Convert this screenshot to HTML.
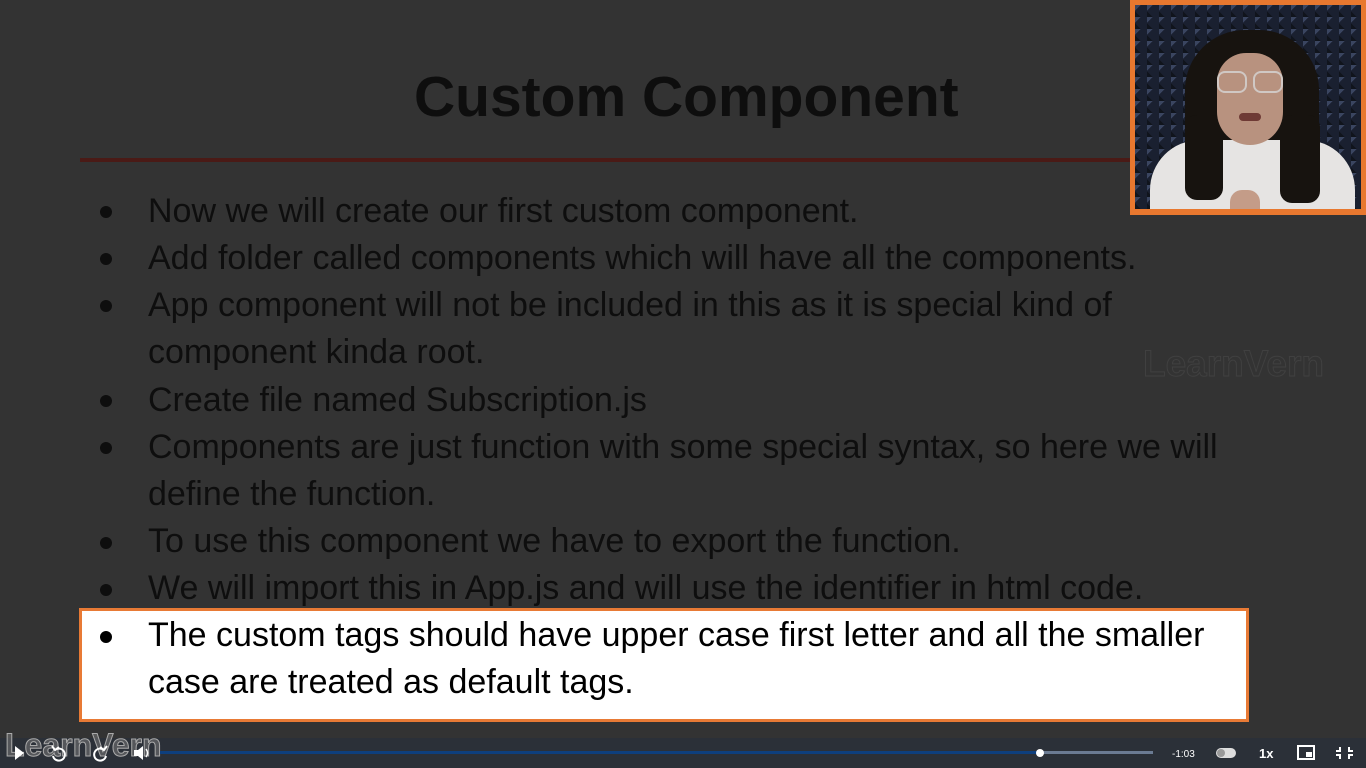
<!DOCTYPE html>
<html><head><meta charset="utf-8"><style>
*{margin:0;padding:0;box-sizing:border-box}
body{width:1366px;height:768px;background:#333;overflow:hidden;position:relative;font-family:"Liberation Sans",Arial,sans-serif}
.t{position:absolute;font-size:34px;color:#0e0e0e;white-space:nowrap;line-height:1}
.b{position:absolute;width:12px;height:12px;border-radius:50%;background:#0e0e0e}
</style></head><body>
<div class="t" style="left:414px;top:69px;font-size:57px;font-weight:bold">Custom Component</div>
<div style="position:absolute;left:80px;top:158px;width:1052px;height:4px;background:#4a1a16"></div>

<div class="b" style="left:100px;top:206px"></div><div class="t" style="left:148px;top:194px">Now we will create our first custom component.</div>
<div class="b" style="left:100px;top:253px"></div><div class="t" style="left:148px;top:241px">Add folder called components which will have all the components.</div>
<div class="b" style="left:100px;top:300px"></div><div class="t" style="left:148px;top:288px">App component will not be included in this as it is special kind of</div>
<div class="t" style="left:148px;top:335px">component kinda root.</div>
<div class="b" style="left:100px;top:395px"></div><div class="t" style="left:148px;top:383px">Create file named Subscription.js</div>
<div class="b" style="left:100px;top:442px"></div><div class="t" style="left:148px;top:430px">Components are just function with some special syntax, so here we will</div>
<div class="t" style="left:148px;top:477px">define the function.</div>
<div class="b" style="left:100px;top:537px"></div><div class="t" style="left:148px;top:524px">To use this component we have to export the function.</div>
<div class="b" style="left:100px;top:584px"></div><div class="t" style="left:148px;top:571px">We will import this in App.js and will use the identifier in html code.</div>

<div style="position:absolute;left:79px;top:608px;width:1170px;height:114px;background:#fff;border:3px solid #e87a35"></div>
<div class="b" style="left:100px;top:631px;background:#000"></div><div class="t" style="left:148px;top:618px;color:#000">The custom tags should have upper case first letter and all the smaller</div>
<div class="t" style="left:148px;top:665px;color:#000">case are treated as default tags.</div>

<div class="t" style="left:1143px;top:345px;font-size:37px;font-weight:bold;color:transparent;-webkit-text-stroke:1px #404040">LearnVern</div>

<!-- webcam -->
<div style="position:absolute;left:1130px;top:0;width:236px;height:215px;background:#e8782f"></div>
<div style="position:absolute;left:1135px;top:5px;width:226px;height:204px;overflow:hidden;background:#1a2030;background-image:linear-gradient(135deg,#3a4560 25%,transparent 25%),linear-gradient(45deg,#10141c 25%,transparent 25%);background-size:12px 12px">
<div style="position:absolute;left:50px;top:25px;width:134px;height:170px;background:#17130f;border-radius:60px 60px 30px 30px"></div>
<div style="position:absolute;left:15px;top:135px;width:205px;height:80px;background:#e6e4e3;border-radius:50px 50px 0 0"></div>
<div style="position:absolute;left:50px;top:110px;width:38px;height:85px;background:#17130f;border-radius:12px"></div>
<div style="position:absolute;left:145px;top:110px;width:40px;height:88px;background:#17130f;border-radius:12px"></div>
<div style="position:absolute;left:82px;top:48px;width:66px;height:92px;background:#b8927f;border-radius:30px 30px 34px 34px"></div>
<div style="position:absolute;left:82px;top:66px;width:30px;height:22px;border:2px solid #d0c8c4;border-radius:8px"></div>
<div style="position:absolute;left:118px;top:66px;width:30px;height:22px;border:2px solid #d0c8c4;border-radius:8px"></div>
<div style="position:absolute;left:104px;top:108px;width:22px;height:8px;background:#6e3a35;border-radius:5px"></div>
<div style="position:absolute;left:95px;top:185px;width:30px;height:20px;background:#c49c88;border-radius:12px 12px 0 0"></div>
</div>

<!-- control bar -->
<div style="position:absolute;left:0;top:738px;width:1366px;height:30px;background:#2b3038"></div>
<div class="t" style="left:5px;top:729px;font-size:32px;font-weight:bold;color:rgba(120,120,120,0.55);-webkit-text-stroke:1px #aaa">LearnVern</div>
<svg style="position:absolute;left:0;top:738px" width="1366" height="30">
<path d="M15 8 L24 15 L15 22Z" fill="#fff"/>
<path d="M55 12 A6 6 0 1 1 53 18" stroke="#fff" stroke-width="2" fill="none"/><path d="M52 8 L55 12 L59 9" stroke="#fff" stroke-width="2" fill="none"/>
<path d="M104 12 A6 6 0 1 0 106 18" stroke="#fff" stroke-width="2" fill="none"/><path d="M107 8 L104 12 L100 9" stroke="#fff" stroke-width="2" fill="none"/>
<path d="M134 12h4l5-4v14l-5-4h-4z" fill="#fff"/><path d="M146 11q3 4 0 8" stroke="#fff" stroke-width="1.5" fill="none"/>
<rect x="160" y="13" width="880" height="3" fill="#0e3f7e"/>
<rect x="1040" y="13" width="113" height="3" fill="#6b7b93"/>
<circle cx="1040" cy="15" r="4" fill="#fff"/>
<text x="1172" y="19" font-size="10" fill="#fff" font-family="Liberation Sans">-1:03</text>
<rect x="1216" y="10" width="20" height="10" rx="5" fill="#ddd"/><circle cx="1221" cy="15" r="4" fill="#999"/>
<text x="1259" y="20" font-size="13" font-weight="bold" fill="#fff" font-family="Liberation Sans">1x</text>
<rect x="1298" y="8" width="16" height="13" fill="none" stroke="#fff" stroke-width="2"/><rect x="1306" y="14" width="6" height="5" fill="#fff"/>
<path d="M1340 9v4h-4M1349 9v4h4M1340 21v-4h-4M1349 21v-4h4" stroke="#fff" stroke-width="2" fill="none"/>
</svg>
</body></html>
